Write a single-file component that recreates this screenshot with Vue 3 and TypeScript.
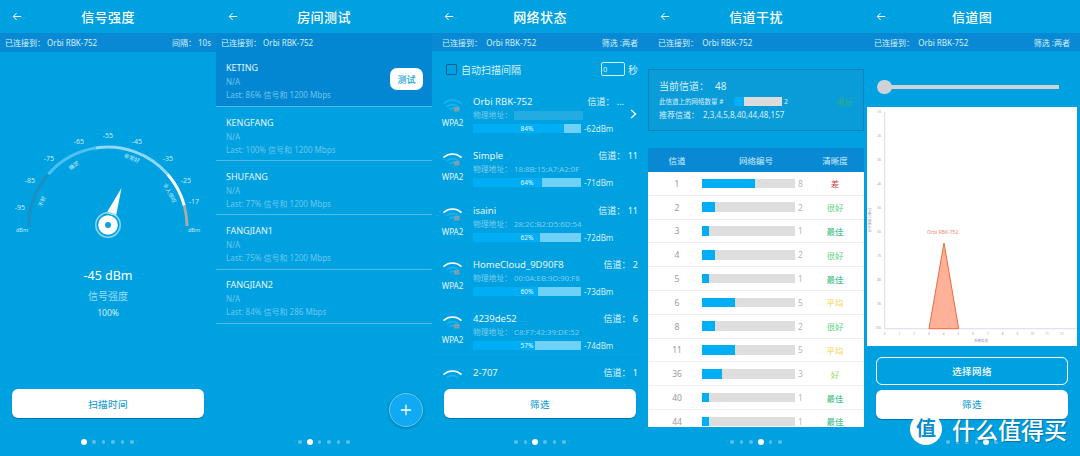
<script setup lang="ts">
// ── 数据 ──
interface WifiItem {
  name: string
  channel: string
  mac: string
  pct: number
  dbm: string
  first?: boolean
}

interface RoomItem {
  name: string
  last: string
  active?: boolean
}

interface ChannelRow {
  ch: number
  count: number
  label: string
  color: string
}

const rooms: RoomItem[] = [
  { name: 'KETING', last: 'Last: 86% 信号和 1200 Mbps', active: true },
  { name: 'KENGFANG', last: 'Last: 100% 信号和 1200 Mbps' },
  { name: 'SHUFANG', last: 'Last: 77% 信号和 1200 Mbps' },
  { name: 'FANGJIAN1', last: 'Last: 75% 信号和 1200 Mbps' },
  { name: 'FANGJIAN2', last: 'Last: 84% 信号和 286 Mbps' },
]

const wifis: WifiItem[] = [
  { name: 'Orbi RBK-752', channel: '信道： ...', mac: '', pct: 84, dbm: '-62dBm', first: true },
  { name: 'Simple', channel: '信道： 11', mac: '18:8B:15:A7:A2:0F', pct: 64, dbm: '-71dBm' },
  { name: 'isaini', channel: '信道： 11', mac: '28:2C:B2:D5:6D:54', pct: 62, dbm: '-72dBm' },
  { name: 'HomeCloud_9D90F8', channel: '信道： 2', mac: '00:0A:EB:9D:90:F8', pct: 60, dbm: '-73dBm' },
  { name: '4239de52', channel: '信道： 6', mac: 'C8:F7:42:39:DE:52', pct: 57, dbm: '-74dBm' },
]

const GOOD = '#66d17f'
const BEST = '#2eb87a'
const AVG = '#f7d44c'

const channels: ChannelRow[] = [
  { ch: 1, count: 8, label: '差', color: '#c9403f' },
  { ch: 2, count: 2, label: '很好', color: GOOD },
  { ch: 3, count: 1, label: '最佳', color: BEST },
  { ch: 4, count: 2, label: '很好', color: GOOD },
  { ch: 5, count: 1, label: '最佳', color: BEST },
  { ch: 6, count: 5, label: '平均', color: AVG },
  { ch: 8, count: 2, label: '很好', color: GOOD },
  { ch: 11, count: 5, label: '平均', color: AVG },
  { ch: 36, count: 3, label: '好', color: '#a5d76a' },
  { ch: 40, count: 1, label: '最佳', color: BEST },
  { ch: 44, count: 1, label: '最佳', color: BEST },
]

// ── 仪表盘 ──
const CX = 108
const CY = 226
const R = 79

function polar(deg: number, r: number) {
  const a = ((deg - 90) * Math.PI) / 180
  return { x: CX + r * Math.cos(a), y: CY + r * Math.sin(a) }
}

function arc(from: number, to: number) {
  const a = polar(from, R)
  const b = polar(to, R)
  return `M${a.x.toFixed(1)} ${a.y.toFixed(1)}A${R} ${R} 0 0 1 ${b.x.toFixed(1)} ${b.y.toFixed(1)}`
}

const segments = [
  { d: arc(-90, -49), color: '#1c8fc0' },
  { d: arc(-49, -9), color: '#4fc0f2' },
  { d: arc(-9, 49), color: '#90d8fa' },
  { d: arc(49, 75), color: '#ffffff' },
  { d: arc(75, 90), color: '#a9a9a9' },
]

const ticks = [
  { t: '-95', x: 20, y: 210 },
  { t: '-85', x: 30, y: 183 },
  { t: '-75', x: 49, y: 161 },
  { t: '-65', x: 79, y: 144 },
  { t: '-55', x: 108, y: 138 },
  { t: '-45', x: 137, y: 144 },
  { t: '-35', x: 168, y: 161 },
  { t: '-25', x: 186, y: 183 },
  { t: '-17', x: 194, y: 204 },
]

const zones = [
  { t: '不好', x: 44, y: 202, r: -70 },
  { t: '确定', x: 75, y: 167, r: -35 },
  { t: '非常好', x: 131, y: 160, r: 22 },
  { t: '令人惊叹', x: 168, y: 194, r: 62 },
]

const xTicks = [0, 1, 2, 3, 4, 5, 6, 7, 8, 9, 10, 11, 12]
const yTicks = [-10, -20, -30, -40, -50, -60, -70, -80, -90, -100]

const dots = [0, 1, 2, 3, 4, 5]
</script>

<template>
  <div class="screens">
    <!-- 信号强度 -->
    <section class="panel">
      <header class="head">
        <svg class="back" viewBox="0 0 12 10"><path d="M11 5H1.5M5.5 1 1.5 5l4 4" /></svg>
        <h1>信号强度</h1>
      </header>
      <div class="status pad-s">
        <span>已连接到：&nbsp;Orbi RBK-752</span>
        <span>间隔： 10s</span>
      </div>
      <svg class="gauge" viewBox="0 0 216 300">
        <path v-for="(s, i) in segments" :key="i" :d="s.d" :stroke="s.color" stroke-width="3" fill="none" />
        <text v-for="t in ticks" :key="t.t" :x="t.x" :y="t.y" class="tick">{{ t.t }}</text>
        <text x="22" y="232" class="tick small">dBm</text>
        <text x="194" y="232" class="tick small">dBm</text>
        <text
          v-for="z in zones"
          :key="z.t"
          :x="z.x"
          :y="z.y"
          class="zone"
          :transform="`rotate(${z.r} ${z.x} ${z.y})`"
        >{{ z.t }}</text>
        <path d="M121.5 188 116 216 106.5 213Z" fill="#fff" />
        <circle cx="108" cy="225" r="12.2" fill="none" stroke="#8fd6fa" stroke-width="1.5" />
        <circle cx="108" cy="225" r="9.8" fill="#fff" />
        <circle cx="108" cy="225" r="3" fill="#0aa0e2" />
      </svg>
      <div class="reading">
        <div class="value">-45 dBm</div>
        <div class="caption">信号强度</div>
        <div class="pct">100%</div>
      </div>
      <button class="btn solid bottom-btn">扫描时间</button>
      <div class="dots"><i v-for="d in dots" :key="d" :class="{ on: d === 0 }" /></div>
    </section>

    <!-- 房间测试 -->
    <section class="panel">
      <header class="head">
        <svg class="back" viewBox="0 0 12 10"><path d="M11 5H1.5M5.5 1 1.5 5l4 4" /></svg>
        <h1>房间测试</h1>
      </header>
      <div class="status status-room pad-s">
        <span>已连接到：&nbsp;Orbi RBK-752</span>
      </div>
      <ul class="rooms">
        <li v-for="r in rooms" :key="r.name" :class="{ active: r.active }">
          <div class="room-name">{{ r.name }}</div>
          <div class="room-sub">N/A</div>
          <div class="room-sub">{{ r.last }}</div>
          <button v-if="r.active" class="test-btn">测试</button>
        </li>
      </ul>
      <button class="fab">
        <svg viewBox="0 0 14 14"><path d="M7 1v12M1 7h12" /></svg>
      </button>
      <div class="dots"><i v-for="d in dots" :key="d" :class="{ on: d === 1 }" /></div>
    </section>

    <!-- 网络状态 -->
    <section class="panel">
      <header class="head">
        <svg class="back" viewBox="0 0 12 10"><path d="M11 5H1.5M5.5 1 1.5 5l4 4" /></svg>
        <h1>网络状态</h1>
      </header>
      <div class="status pad-m">
        <span>已连接到：&nbsp;&nbsp;Orbi RBK-752</span>
        <span>筛选 :两者</span>
      </div>
      <div class="auto-row">
        <span class="check" />
        <span class="auto-label">自动扫描间隔</span>
        <span class="num-box">0</span>
        <span class="auto-unit">秒</span>
      </div>
      <div class="wifi-list">
        <div v-for="w in wifis" :key="w.name" class="wifi">
          <div class="wifi-icon">
            <svg viewBox="0 0 22 16">
              <g fill="none" stroke-linecap="round" stroke-width="1.8">
                <path :stroke="w.first ? '#18b4f0' : '#ffffff'" d="M2 5.5C7 1 15 1 20 5.5" />
                <path stroke="#18b4f0" d="M5.5 9C8.5 6.5 13.5 6.5 16.5 9" />
                <path stroke="#18b4f0" d="M8.5 12C10 11 12 11 13.5 12" />
              </g>
              <rect x="12.5" y="9.5" width="6" height="5" rx="0.5" fill="#7a9fb0" />
            </svg>
            <span>WPA2</span>
          </div>
          <div class="wifi-body">
            <div class="wifi-top">
              <span class="wifi-name">{{ w.name }}</span>
              <span class="wifi-ch" :class="{ clip: w.first }">{{ w.channel }}</span>
            </div>
            <div class="wifi-mac">
              物理地址： {{ w.mac }}
              <span v-if="w.first" class="mac-blur" />
            </div>
            <div class="wifi-bar-row">
              <div class="wifi-bar">
                <div class="wifi-fill" :style="{ width: w.pct + '%' }" />
                <span>{{ w.pct }}%</span>
              </div>
              <span class="wifi-dbm">{{ w.dbm }}</span>
            </div>
          </div>
          <svg v-if="w.first" class="chev" viewBox="0 0 7 10"><path d="M1.2 1 5.5 5 1.2 9" /></svg>
        </div>
        <div class="wifi">
          <div class="wifi-icon">
            <svg viewBox="0 0 22 16">
              <g fill="none" stroke-linecap="round" stroke-width="1.8">
                <path stroke="#fff" d="M2 5.5C7 1 15 1 20 5.5" />
                <path stroke="#18b4f0" d="M5.5 9C8.5 6.5 13.5 6.5 16.5 9" />
              </g>
            </svg>
          </div>
          <div class="wifi-body">
            <div class="wifi-top">
              <span class="wifi-name">2-707</span>
              <span class="wifi-ch">信道： 1</span>
            </div>
          </div>
        </div>
      </div>
      <div class="foot-mask">
        <button class="btn solid">筛选</button>
      </div>
      <div class="dots"><i v-for="d in dots" :key="d" :class="{ on: d === 2 }" /></div>
    </section>

    <!-- 信道干扰 -->
    <section class="panel">
      <header class="head">
        <svg class="back" viewBox="0 0 12 10"><path d="M11 5H1.5M5.5 1 1.5 5l4 4" /></svg>
        <h1>信道干扰</h1>
      </header>
      <div class="status pad-m">
        <span>已连接到：&nbsp;&nbsp;Orbi RBK-752</span>
      </div>
      <div class="current">
        <div class="cur-title">当前信道：<b>48</b></div>
        <div class="cur-row">
          <span class="cur-small">此信道上的网络数量 #</span>
          <span class="cur-bar"><i /></span>
          <span class="cur-num">2</span>
          <span class="cur-grade">很好</span>
        </div>
        <div class="cur-rec">推荐信道： <span>2,3,4,5,8,40,44,48,157</span></div>
      </div>
      <div class="table">
        <div class="thead">
          <span class="c-ch">信道</span>
          <span class="c-net">网络编号</span>
          <span class="c-q">清晰度</span>
        </div>
        <div v-for="c in channels" :key="c.ch" class="trow">
          <span class="c-ch">{{ c.ch }}</span>
          <span class="c-net2">
            <span class="tbar"><i :style="{ width: (c.count * 100) / 14 + '%' }" /></span>
            <span class="tnum">{{ c.count }}</span>
          </span>
          <span class="c-q" :style="{ color: c.color }">{{ c.label }}</span>
        </div>
      </div>
      <div class="dots"><i v-for="d in dots" :key="d" :class="{ on: d === 3 }" /></div>
    </section>

    <!-- 信道图 -->
    <section class="panel">
      <header class="head">
        <svg class="back" viewBox="0 0 12 10"><path d="M11 5H1.5M5.5 1 1.5 5l4 4" /></svg>
        <h1>信道图</h1>
      </header>
      <div class="status pad-m">
        <span>已连接到：&nbsp;&nbsp;Orbi RBK-752</span>
        <span>筛选 :两者</span>
      </div>
      <div class="slider"><i /></div>
      <svg class="chart" viewBox="0 0 210 239">
        <path d="M17.7 5V221.7H210" fill="none" stroke="#dcdcec" stroke-width="1" />
        <text v-for="(y, i) in yTicks" :key="y" x="14" :y="6 + i * 24" class="axis end">{{ y }}</text>
        <text v-for="(x, i) in xTicks" :key="x" :x="17.7 + i * 14.75" y="228" class="axis mid">{{ x }}</text>
        <text x="4" y="113" transform="rotate(-90 4 113)" class="axis purple mid">信号强度 [dBm]</text>
        <text x="114" y="234.5" class="axis purple mid">系统信道</text>
        <text x="75.7" y="126.5" class="label">Orbi RBK-752</text>
        <path d="M62 221.7 77 136 91.7 221.7Z" fill="#ffb199" stroke="#f4693a" stroke-width="1" />
      </svg>
      <div class="duo">
        <button class="btn outline">选择网络</button>
        <button class="btn solid">筛选</button>
      </div>
      <div class="dots"><i v-for="d in dots" :key="d" :class="{ on: d === 4 }" /></div>
      <div class="mark">
        <span class="mark-badge">值</span>
        <span class="mark-text">什么值得买</span>
      </div>
    </section>
  </div>
</template>

<style>
html,
body {
  margin: 0;
  background: #00a1e0;
}
</style>

<style scoped>
.screens {
  display: flex;
  width: 1080px;
  height: 456px;
  overflow: hidden;
  font-family: "Noto Sans", "Noto Sans CJK SC", sans-serif;
  color: #fff;
  background: #00a1e0;
}

.panel {
  position: relative;
  flex: 0 0 216px;
  height: 456px;
  display: flex;
  flex-direction: column;
  overflow: hidden;
}

/* ── 头部 ── */
.head {
  position: relative;
  flex: 0 0 33px;
  display: flex;
  align-items: center;
  justify-content: center;
}

.head h1 {
  margin: 0;
  font-size: 13px;
  font-weight: 500;
  letter-spacing: 0.4px;
}

.back {
  position: absolute;
  left: 12px;
  top: 12px;
  width: 10px;
  height: 9px;
  fill: none;
  stroke: #fff;
  stroke-width: 1.2;
}

.status {
  flex: 0 0 18px;
  display: flex;
  justify-content: space-between;
  align-items: center;
  background: #0989d4;
  font-size: 8px;
  color: #d8f0fb;
}

.pad-s {
  padding: 0 5px;
  flex-basis: 19px;
}

.pad-m {
  padding: 0 10px;
}

.status-room {
  background: #0387d2;
}

/* ── 仪表盘 ── */
.gauge {
  position: absolute;
  left: 0;
  top: 0;
  width: 216px;
  height: 300px;
}

.tick {
  font-size: 7px;
  fill: #c5ebfb;
  text-anchor: middle;
}

.tick.small {
  font-size: 5.5px;
}

.zone {
  font-size: 5.5px;
  fill: #c5ebfb;
  text-anchor: middle;
}

.reading {
  position: absolute;
  left: 0;
  right: 0;
  top: 266px;
  text-align: center;
}

.value {
  font-size: 12.5px;
  line-height: 20px;
}

.caption {
  font-size: 10px;
  line-height: 20px;
  color: #9fdcf7;
}

.pct {
  font-size: 8.5px;
  line-height: 13px;
  color: #d8f0fb;
}

/* ── 按钮 ── */
.btn {
  display: block;
  width: 192px;
  height: 29px;
  margin: 0 auto;
  border: 0;
  border-radius: 6px;
  box-sizing: border-box;
  font: 500 9.5px "Noto Sans CJK SC", sans-serif;
  letter-spacing: 0.4px;
}

.btn.solid {
  background: #fff;
  color: #1f9fd6;
  box-shadow: 0 1px 1px rgba(0, 60, 110, 0.45);
}

.btn.outline {
  height: 28px;
  background: transparent;
  color: #fff;
  border: 1.5px solid #fff;
}

.bottom-btn {
  position: absolute;
  left: 12px;
  top: 389px;
}

.dots {
  position: absolute;
  left: 0;
  right: 0;
  top: 439px;
  display: flex;
  justify-content: center;
  align-items: center;
  gap: 6px;
}

.dots i {
  width: 3.5px;
  height: 3.5px;
  border-radius: 50%;
  background: #5cbce6;
}

.dots i.on {
  width: 6px;
  height: 6px;
  background: #fff;
  margin: 0 -1px;
}

/* ── 房间测试 ── */
.rooms {
  list-style: none;
  margin: 0;
  padding: 0;
}

.rooms li {
  position: relative;
  height: 54.2px;
  padding: 7.5px 0 0 10px;
  box-sizing: border-box;
  border-bottom: 1px solid #4dbde8;
}

.rooms li.active {
  background: #0387d2;
  height: 55px;
}

.room-name {
  font-size: 9px;
  line-height: 15px;
  color: #e6f6fd;
}

.room-sub {
  font-size: 8px;
  line-height: 13px;
  color: #6cc6ee;
}

.test-btn {
  position: absolute;
  right: 9px;
  top: 16px;
  width: 33px;
  height: 22px;
  border: 0;
  border-radius: 7px;
  background: #fff;
  color: #20a3dc;
  font: 500 9px "Noto Sans CJK SC", sans-serif;
  padding: 0;
}

.fab {
  position: absolute;
  right: 9px;
  top: 393px;
  width: 34px;
  height: 34px;
  padding: 0;
  border: 1px solid #6cc8ee;
  border-radius: 50%;
  background: #10a9f4;
  box-shadow: 0 1px 3px rgba(0, 50, 100, 0.4);
  display: flex;
  align-items: center;
  justify-content: center;
}

.fab svg {
  width: 12px;
  height: 12px;
  fill: none;
  stroke: #fff;
  stroke-width: 1.5;
}

/* ── 网络状态 ── */
.auto-row {
  flex: 0 0 36px;
  display: flex;
  align-items: center;
  padding: 0 10px 0 14px;
  font-size: 10px;
  color: #d8f0fb;
}

.check {
  width: 11px;
  height: 11px;
  box-sizing: border-box;
  border: 1.5px solid #0a5f8c;
  border-radius: 1px;
  margin-right: 4px;
}

.auto-label {
  flex: 1;
}

.num-box {
  width: 24px;
  height: 14px;
  border: 1px solid #cdeefb;
  border-radius: 2px;
  box-sizing: border-box;
  padding-left: 1px;
  font-size: 7.5px;
  line-height: 12px;
  margin-right: 3px;
}

.wifi-list {
  display: flex;
  flex-direction: column;
}

.wifi {
  position: relative;
  height: 54.3px;
  flex: none;
  display: flex;
  box-sizing: border-box;
  border-bottom: 1px solid #0b9bd8;
  padding-top: 7px;
}

.wifi-icon {
  flex: 0 0 41px;
  display: flex;
  flex-direction: column;
  align-items: center;
  font-size: 8px;
  color: #e6f6fd;
  padding-top: 4px;
}

.wifi-icon svg {
  width: 21px;
  height: 15px;
  margin-bottom: 4px;
}

.wifi-body {
  flex: 1;
  min-width: 0;
  padding-right: 10px;
}

.wifi-top {
  display: flex;
  justify-content: space-between;
  align-items: center;
  height: 15px;
}

.wifi-name {
  font-size: 9.5px;
  color: #e6f6fd;
}

.wifi-ch {
  font-size: 9px;
  color: #e6f6fd;
}

.wifi-ch.clip {
  margin-right: 14px;
}

.wifi-mac {
  position: relative;
  font-size: 7.8px;
  line-height: 13px;
  color: #7dcdf0;
  white-space: nowrap;
}

.mac-blur {
  position: absolute;
  left: 41px;
  top: 2px;
  width: 69px;
  height: 9px;
  background: #22ace2;
}

.wifi-bar-row {
  display: flex;
  align-items: center;
  height: 11px;
  margin-top: 1px;
}

.wifi-bar {
  position: relative;
  flex: 0 0 108px;
  height: 9px;
  background: #6fd0f8;
  font-size: 6.5px;
  line-height: 9px;
  text-align: center;
  color: #e6f6fd;
}

.wifi-bar span {
  position: relative;
}

.wifi-fill {
  position: absolute;
  left: 0;
  top: 0;
  bottom: 0;
  background: #00aef6;
}

.wifi-dbm {
  font-size: 8px;
  margin-left: 3px;
  color: #d8f0fb;
}

.chev {
  position: absolute;
  right: 11px;
  top: 22px;
  width: 7px;
  height: 10px;
  fill: none;
  stroke: #fff;
  stroke-width: 1.3;
}

.foot-mask {
  position: absolute;
  left: 0;
  right: 0;
  top: 380px;
  height: 76px;
  padding-top: 9px;
  box-sizing: border-box;
  background: #00a1e0;
}

/* ── 信道干扰 ── */
.current {
  box-sizing: border-box;
  height: 62px;
  margin-top: 18px;
  padding: 8px 10px 0;
  border: 1px solid #0c85bd;
  background: #0a9bd9;
}

.cur-title {
  font-size: 10px;
  line-height: 16px;
  color: #d8f0fb;
}

.cur-title b {
  font-weight: 400;
  font-size: 10px;
  margin-left: 6px;
}

.cur-row {
  display: flex;
  align-items: center;
  height: 14px;
  font-size: 6.5px;
  color: #d8f0fb;
}

.cur-small {
  flex: 0 0 75px;
  white-space: nowrap;
}

.cur-bar {
  flex: 0 0 48px;
  height: 9px;
  background: #dcdcdc;
}

.cur-bar i {
  display: block;
  width: 10px;
  height: 100%;
  background: #00aef6;
}

.cur-num {
  margin-left: 2px;
  font-size: 7px;
}

.cur-grade {
  margin-left: auto;
  font-size: 8px;
  color: #2bb57b;
}

.cur-rec {
  font-size: 8px;
  line-height: 14px;
  color: #d8f0fb;
}

.cur-rec span {
  margin-left: 2px;
}

.table {
  margin-top: 17px;
  height: 279px;
  overflow: hidden;
  flex: none;
  background: #fff;
}

.thead {
  display: flex;
  align-items: center;
  height: 24px;
  background: #0989d4;
  color: #cfecf9;
  font-size: 8.5px;
}

.trow {
  display: flex;
  align-items: center;
  height: 23.8px;
  box-sizing: border-box;
  border-bottom: 1px solid #eeeeee;
  font-size: 8.5px;
  color: #9a9a9a;
}

.c-ch {
  flex: 0 0 58px;
  text-align: center;
}

.c-net {
  flex: 0 0 100px;
  text-align: center;
}

.c-net2 {
  flex: 0 0 104px;
  margin-left: -4px;
  display: flex;
  align-items: center;
}

.c-q {
  flex: 1;
  text-align: center;
}

.tbar {
  flex: 0 0 93px;
  height: 9.5px;
  background: #dedede;
}

.tbar i {
  display: block;
  height: 100%;
  background: #00aef6;
}

.tnum {
  margin-left: 3px;
  color: #b5b5b5;
}

/* ── 信道图 ── */
.slider {
  position: relative;
  flex: none;
  height: 3.5px;
  margin: 34px 21px 0 20px;
  background: #cfd3d8;
}

.slider i {
  position: absolute;
  left: -7px;
  top: -5.5px;
  width: 14.5px;
  height: 14.5px;
  border-radius: 50%;
  background: #cfd3d8;
}

.chart {
  flex: none;
  width: 210px;
  height: 239px;
  margin: 18.5px 3px 0;
  background: #fff;
}

.axis {
  font-size: 3px;
  fill: #9a9aa8;
}

.axis.end {
  text-anchor: end;
}

.axis.mid {
  text-anchor: middle;
}

.axis.purple {
  fill: #a08cb8;
  font-size: 3.5px;
}

.label {
  font-size: 5px;
  fill: #ee8c68;
  text-anchor: middle;
}

.duo {
  display: flex;
  flex-direction: column;
  gap: 5px;
  margin-top: 10.5px;
}

.mark {
  position: absolute;
  left: 46px;
  top: 413px;
  display: flex;
  align-items: center;
  gap: 10px;
  text-shadow: 1px 1px 1px rgba(0, 50, 90, 0.4);
}

.mark-badge {
  width: 32px;
  height: 32px;
  border-radius: 50%;
  background: #fff;
  color: #0a8fcc;
  font-family: "Noto Sans CJK SC", sans-serif;
  font-size: 20px;
  font-weight: 700;
  line-height: 30px;
  text-align: center;
  text-shadow: none;
}

.mark-text {
  font-family: "Noto Sans CJK SC", sans-serif;
  font-size: 23px;
  font-weight: 500;
  line-height: 30px;
  white-space: nowrap;
}
</style>
